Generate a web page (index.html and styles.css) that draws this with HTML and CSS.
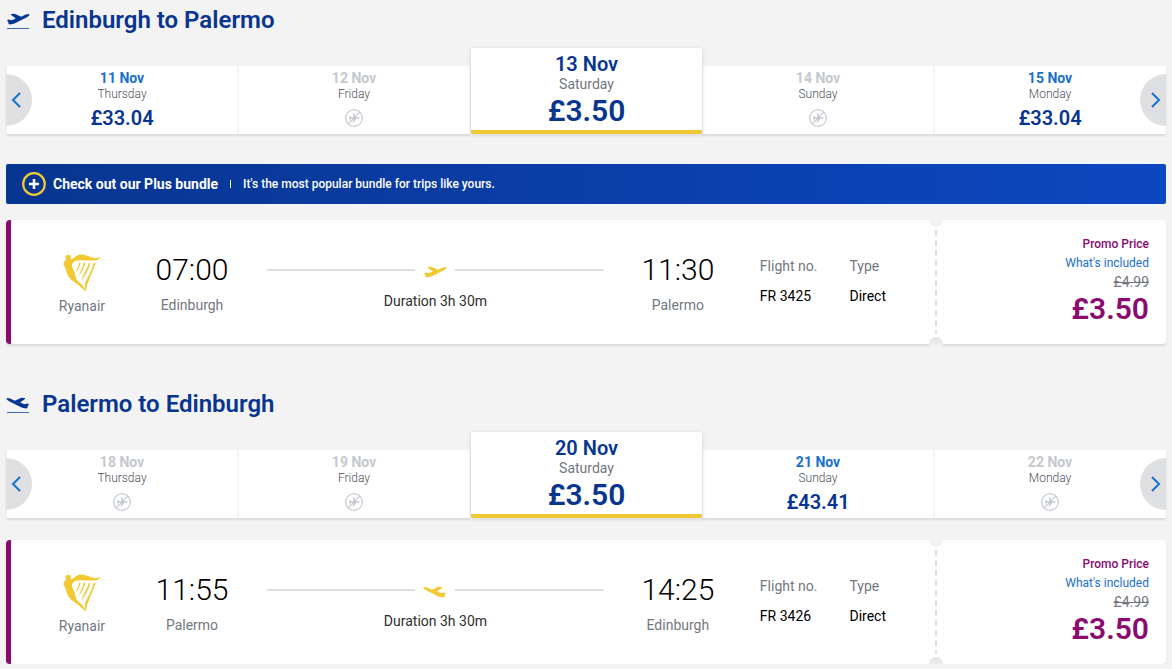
FILE: index.html
```html
<!DOCTYPE html>
<html lang="en">
<head>
    <meta charset="UTF-8">
    <meta name="viewport" content="width=device-width, initial-scale=1.0">
    <title>Select your flights</title>
    <link rel="stylesheet" href="styles.css">
</head>
<body>
    <!-- Shared icons -->
    <svg class="sprite" aria-hidden="true">
        <symbol id="plane" viewBox="0 0 24 14">
            <path d="M1 8.3 2.8 7.4 5.6 8.3 9.8 6.5 4.8 2.7 5.3 2 8.6 1.7 15.2 4.8 19.8 2.6C21.6 1.8 23.3 1.7 23.4 2.6 23.6 3.6 22 4.6 20.4 5.4L10 10.8C7.6 12 5.6 12.4 3.6 12.4L2.3 11.4 2.5 10.4Z"/>
        </symbol>
        <symbol id="no-flight" viewBox="0 0 18 18">
            <circle cx="9" cy="9" r="8.3" fill="none" stroke="currentColor" stroke-width="1.2"/>
            <path d="M4 6.8h.8l1.2 1.5h2.8L7.6 4.4h.9l2.9 3.9h2.2c1.2 0 1.2 1.4 0 1.4h-2.2l-2.9 3.9h-.9l1.2-3.9H6l-1.2 1.5H4L4.6 9z" fill="currentColor"/>
            <path d="M3.1 14.9 14.9 3.1" stroke="currentColor" stroke-width="1.1"/>
        </symbol>
        <symbol id="harp" viewBox="0 0 38 38">
            <path d="M2.4 2.2C4 .8 7 .8 7.8 2 8.3 3.2 7.8 4.5 7.3 5.2 10 5.4 11.4 3 14 1.4 19 -.8 24 1.8 29 3.4 32.4 4.4 35 4 38 3.2 36.4 5.6 33.4 6.2 30.5 6.5 24 7 18 5.4 13 6.8 9.8 8 8.4 10.4 9.2 13 10 16 11.6 17.6 12.2 20.4 12.6 22.4 12.4 23.6 13.6 25.4 16 29 20 30.4 21.3 34L22 37.8C18.8 33 14.6 30.6 10.6 27.6 5.2 23.6 3.4 18.6 2.2 13.4L.4 10.6C.4 8.4 2 6.8 3.2 5.8Z"/>
            <path d="M22 37.8C23.8 35.6 23.2 32.6 24.6 29.6L33 8.6 30.4 9.4C29.6 16 23 25 21.9 30.4Z"/>
            <path d="M16.2 8.4C15.8 12.4 13.6 15.2 13 18.2 15.6 15.4 17.2 11.6 17.6 8.4ZM20.8 8.6C20 14 16.4 18 15.6 22.6 18.4 18.6 21.4 13.2 22.4 8.8ZM25.6 9C24.6 15.4 19 21.4 18.2 27 21.2 22.8 26 15.2 27.4 9.2Z"/>
        </symbol>
        <symbol id="chevron" viewBox="0 0 10 16">
            <path d="M9 1 2 8l7 7" fill="none" stroke="currentColor" stroke-width="2"/>
        </symbol>
    </svg>

    <main>
        <section class="journey">
            <h1 class="journey-title">
                <svg class="title-icon" viewBox="0 0 24 18"><use href="#plane" width="24" height="14"/><path d="M1 16.5h22" stroke="#3f66b5"/></svg>
                Edinburgh to Palermo
            </h1>
            <div class="carousel">
                <button class="nav prev" aria-label="Previous dates"><svg><use href="#chevron"/></svg></button>
                <button class="day">
                    <span class="date">11 Nov</span>
                    <span class="weekday">Thursday</span>
                    <span class="fare">£33.04</span>
                </button>
                <button class="day disabled" disabled>
                    <span class="date">12 Nov</span>
                    <span class="weekday">Friday</span>
                    <svg class="no-flight"><use href="#no-flight"/></svg>
                </button>
                <button class="day selected">
                    <span class="date">13 Nov</span>
                    <span class="weekday">Saturday</span>
                    <span class="fare">£3.50</span>
                </button>
                <button class="day disabled" disabled>
                    <span class="date">14 Nov</span>
                    <span class="weekday">Sunday</span>
                    <svg class="no-flight"><use href="#no-flight"/></svg>
                </button>
                <button class="day">
                    <span class="date">15 Nov</span>
                    <span class="weekday">Monday</span>
                    <span class="fare">£33.04</span>
                </button>
                <button class="nav next" aria-label="Next dates"><svg class="mirror"><use href="#chevron"/></svg></button>
            </div>

            <div class="banner">
                <svg class="plus-icon" viewBox="0 0 24 24">
                    <circle cx="12" cy="12" r="10.8" fill="none" stroke="#f1c933" stroke-width="2.2"/>
                    <path d="M12 7v10M7 12h10" stroke="#fff" stroke-width="2.6"/>
                </svg>
                <strong>Check out our Plus bundle</strong>
                <span class="divider"></span>
                <span class="banner-text">It's the most popular bundle for trips like yours.</span>
            </div>

            <article class="card">
                <div class="flight">
                    <div class="airline">
                        <svg class="harp"><use href="#harp"/></svg>
                        <span>Ryanair</span>
                    </div>
                    <div class="stop">
                        <time>07:00</time>
                        <span>Edinburgh</span>
                    </div>
                    <div class="route">
                        <div class="line"><svg><use href="#plane"/></svg></div>
                        <span>Duration 3h 30m</span>
                    </div>
                    <div class="stop">
                        <time>11:30</time>
                        <span>Palermo</span>
                    </div>
                    <dl class="details">
                        <div><dt>Flight no.</dt><dd>FR 3425</dd></div>
                        <div><dt>Type</dt><dd>Direct</dd></div>
                    </dl>
                </div>
                <div class="price">
                    <span class="promo">Promo Price</span>
                    <a href="#">What's included</a>
                    <del>£4.99</del>
                    <strong>£3.50</strong>
                </div>
            </article>
        </section>

        <section class="journey">
            <h1 class="journey-title">
                <svg class="title-icon mirror" viewBox="0 0 24 18"><use href="#plane" width="24" height="14"/><path d="M1 16.5h22" stroke="#3f66b5"/></svg>
                Palermo to Edinburgh
            </h1>
            <div class="carousel">
                <button class="nav prev" aria-label="Previous dates"><svg><use href="#chevron"/></svg></button>
                <button class="day disabled" disabled>
                    <span class="date">18 Nov</span>
                    <span class="weekday">Thursday</span>
                    <svg class="no-flight"><use href="#no-flight"/></svg>
                </button>
                <button class="day disabled" disabled>
                    <span class="date">19 Nov</span>
                    <span class="weekday">Friday</span>
                    <svg class="no-flight"><use href="#no-flight"/></svg>
                </button>
                <button class="day selected">
                    <span class="date">20 Nov</span>
                    <span class="weekday">Saturday</span>
                    <span class="fare">£3.50</span>
                </button>
                <button class="day">
                    <span class="date">21 Nov</span>
                    <span class="weekday">Sunday</span>
                    <span class="fare">£43.41</span>
                </button>
                <button class="day disabled" disabled>
                    <span class="date">22 Nov</span>
                    <span class="weekday">Monday</span>
                    <svg class="no-flight"><use href="#no-flight"/></svg>
                </button>
                <button class="nav next" aria-label="Next dates"><svg class="mirror"><use href="#chevron"/></svg></button>
            </div>

            <article class="card">
                <div class="flight">
                    <div class="airline">
                        <svg class="harp"><use href="#harp"/></svg>
                        <span>Ryanair</span>
                    </div>
                    <div class="stop">
                        <time>11:55</time>
                        <span>Palermo</span>
                    </div>
                    <div class="route">
                        <div class="line"><svg class="mirror"><use href="#plane"/></svg></div>
                        <span>Duration 3h 30m</span>
                    </div>
                    <div class="stop">
                        <time>14:25</time>
                        <span>Edinburgh</span>
                    </div>
                    <dl class="details">
                        <div><dt>Flight no.</dt><dd>FR 3426</dd></div>
                        <div><dt>Type</dt><dd>Direct</dd></div>
                    </dl>
                </div>
                <div class="price">
                    <span class="promo">Promo Price</span>
                    <a href="#">What's included</a>
                    <del>£4.99</del>
                    <strong>£3.50</strong>
                </div>
            </article>
        </section>
    </main>
</body>
</html>
```
FILE: styles.css
```css
* {
    box-sizing: border-box;
}

body {
    margin: 0;
    padding: 0 6px;
    background-color: #f3f3f3;
    font-family: Roboto, Arial, sans-serif;
    font-size: 14px;
    line-height: 20px;
    color: #2e2e2e;
}

button {
    border: 0;
    padding: 0;
    font: inherit;
    cursor: pointer;
}

.sprite {
    display: none;
}

.mirror {
    transform: scaleX(-1);
}

/* Journey heading */
.journey + .journey {
    margin-top: 40px;
}

.journey-title {
    display: flex;
    align-items: center;
    gap: 12px;
    height: 40px;
    margin: 0 0 8px;
    font-size: 24px;
    font-weight: 600;
    color: #073590;
}

.title-icon {
    width: 24px;
    height: 18px;
    margin-top: 2px;
    fill: currentColor;
}

/* Date carousel */
.carousel {
    position: relative;
    display: grid;
    grid-template-columns: repeat(5, 1fr);
    align-items: end;
}

.day {
    display: flex;
    flex-direction: column;
    align-items: center;
    height: 68px;
    padding-top: 4px;
    background-color: #fff;
    box-shadow: inset 1px 0 #f3f3f3, 0 2px 2px rgba(0, 0, 0, 0.1);
    color: #073590;
}

.date {
    line-height: 16px;
    font-weight: 700;
    color: #1a70cf;
}

.weekday {
    font-size: 12px;
    font-weight: 300;
    line-height: 16px;
    color: #4b4f57;
}

.fare {
    margin-top: 4px;
    font-size: 20px;
    font-weight: 600;
    line-height: 24px;
}

.disabled .date {
    color: #c4c8ce;
}

.no-flight {
    width: 18px;
    height: 18px;
    margin-top: 7px;
    color: #c4c8ce;
}

.day.selected {
    position: relative;
    height: 86px;
    padding-top: 4px;
    border-bottom: 4px solid #f1c933;
    margin-left: 1px;
    border-radius: 2px;
    box-shadow: 0 1px 4px rgba(0, 0, 0, 0.15);
}

.selected .date {
    font-size: 20px;
    font-weight: 600;
    line-height: 24px;
    color: #073590;
}

.selected .weekday {
    font-size: 14px;
    font-weight: 400;
    color: #737780;
}

.selected .fare {
    margin-top: 2px;
    font-size: 30px;
    line-height: 34px;
}

.nav {
    position: absolute;
    z-index: 1;
    bottom: 8px;
    display: flex;
    align-items: center;
    width: 26px;
    height: 52px;
    background-color: #dfe0e1;
    color: #1a70cf;
}

.nav svg {
    width: 10px;
    height: 16px;
}

.prev {
    left: 0;
    padding-left: 5px;
    border-radius: 0 26px 26px 0;
}

.next {
    right: 0;
    justify-content: flex-end;
    padding-right: 5px;
    border-radius: 26px 0 0 26px;
}

/* Plus banner */
.banner {
    display: flex;
    align-items: center;
    height: 40px;
    margin-top: 30px;
    padding-left: 16px;
    border-radius: 2px;
    background: linear-gradient(90deg, #073590, #0d47c0);
    color: #fff;
}

.plus-icon {
    width: 24px;
    height: 24px;
    margin-right: 7px;
}

.divider {
    width: 1px;
    height: 8px;
    margin: 0 12px;
    background-color: #fff;
}

.banner-text {
    font-size: 12px;
    font-weight: 500;
}

/* Flight card */
.card {
    display: flex;
    height: 124px;
    margin-top: 22px;
    border-left: 5px solid #8b0a6e;
    border-radius: 4px;
    background-color: #fff;
    box-shadow: 0 2px 2px rgba(0, 0, 0, 0.1);
}

.banner + .card {
    margin-top: 16px;
}

.flight {
    flex: 1;
    display: flex;
    align-items: flex-start;
    padding: 32px 49px 0 0;
}

.airline,
.stop {
    display: flex;
    flex-direction: column;
    align-items: center;
    color: #737780;
}

.airline {
    width: 142px;
}

.harp {
    width: 38px;
    height: 38px;
    margin: 2px 0 4px;
    fill: #f1c933;
}

.stop {
    width: 78px;
}

.stop time {
    margin-bottom: 7px;
    font-size: 30px;
    font-weight: 350;
    line-height: 36px;
    color: #000;
}

.route {
    flex: 1;
    margin: 0 35px 0 36px;
    text-align: center;
}

.line {
    display: flex;
    align-items: center;
    gap: 8px;
    height: 36px;
    margin-bottom: 3px;
}

.line::before,
.line::after {
    content: "";
    flex: 1;
    height: 2px;
    background-color: #dfe0e1;
}

.line svg {
    width: 24px;
    height: 14px;
    margin-top: 4px;
    fill: #f1c933;
}

.details {
    display: flex;
    gap: 32px;
    margin: 4px 0 0 43px;
}

.details dt {
    margin-bottom: 10px;
    color: #737780;
}

.details dd {
    margin: 0;
    color: #000;
}

/* Ticket stub with the perforated edge */
.price {
    position: relative;
    flex: 0 0 231px;
    display: flex;
    flex-direction: column;
    align-items: flex-end;
    padding: 15px 17px 0 0;
    font-size: 12px;
    line-height: 19px;
    background: repeating-linear-gradient(#dfe0e1 0 6px, transparent 6px 10px) 0 10px / 2px 104px no-repeat;
}

.price::before,
.price::after {
    content: "";
    position: absolute;
    left: -6px;
    width: 14px;
    background-color: #f3f3f3;
}

.price::before {
    top: 0;
    height: 7px;
    border-radius: 0 0 7px 7px;
}

.price::after {
    bottom: -3px;
    height: 10px;
    border-radius: 7px 7px 0 0;
    background-image: linear-gradient(#dfe0e1, #f3f3f3);
}

.promo {
    font-weight: 500;
    color: #8b0a6e;
}

.price a {
    color: #1a70cf;
    text-decoration: none;
}

.price del {
    font-size: 14px;
    color: #737780;
}

.price strong {
    font-size: 30px;
    font-weight: 600;
    line-height: 34px;
    color: #8b0a6e;
}
```
